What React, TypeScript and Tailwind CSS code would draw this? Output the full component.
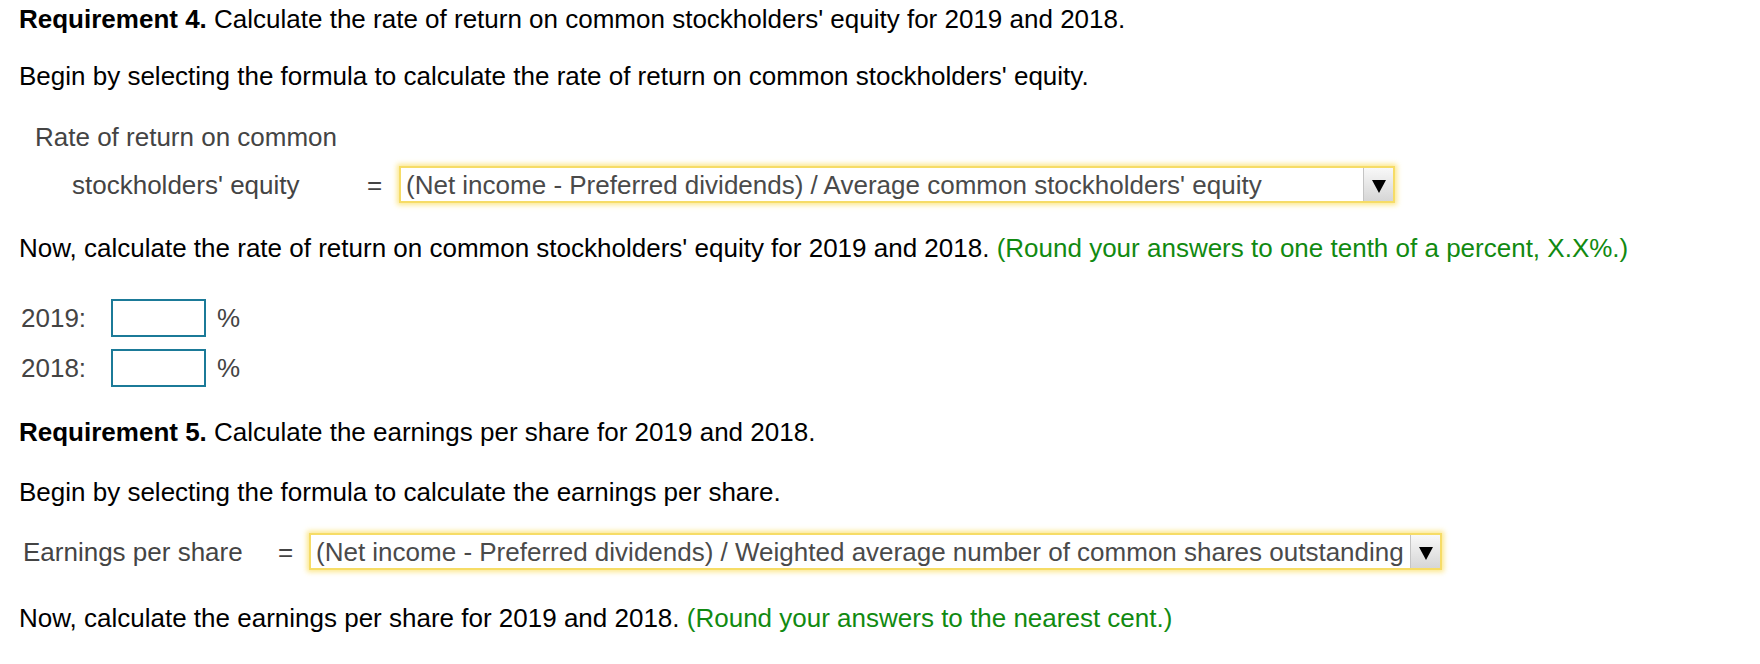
import { useState } from "react";

const font = { fontFamily: '"Liberation Sans", Arial, sans-serif' };

interface FormulaSelectProps {
  value: string;
  width: string;
}

const FormulaSelect = ({ value, width }: FormulaSelectProps) => (
  <div
    className={`flex h-[37px] items-stretch border-2 border-[#f6dc66] bg-white shadow-[0_0_5px_2px_rgba(250,215,60,0.6)] ${width}`}
  >
    <div className="flex flex-1 items-center whitespace-nowrap pl-[5px] text-[#4a4a4a]">{value}</div>
    <div className="flex w-[30px] items-center justify-center border-l border-[#c4c4c4] bg-gradient-to-b from-[#f8f8f8] to-[#d6d6d6] pt-[2px]">
      <svg width="14" height="14" viewBox="0 0 14 14">
        <polygon points="0,1 14,1 7,14" fill="#000" />
      </svg>
    </div>
  </div>
);

const PercentInput = ({ label }: { label: string }) => {
  const [val, setVal] = useState("");
  return (
    <div className="flex items-center">
      <span className="w-[90px] text-[#444]">{label}</span>
      <input
        value={val}
        onChange={(e) => setVal(e.target.value)}
        className="h-[38px] w-[95px] border-2 border-[#1b7a98] bg-white outline-none"
      />
      <span className="ml-[11px] text-[#444]">%</span>
    </div>
  );
};

export default function App() {
  return (
    <div className="min-h-[664px] w-[1760px] bg-white pl-[19px] pt-[4px] text-[26px] leading-[30px] text-black" style={font}>
      <p>
        <b>Requirement 4.</b> Calculate the rate of return on common stockholders' equity for 2019 and 2018.
      </p>
      <p className="mt-[27px]">Begin by selecting the formula to calculate the rate of return on common stockholders' equity.</p>

      <p className="ml-[16px] mt-[31px] text-[#444]">Rate of return on common</p>
      <div className="mt-[14px] flex items-center">
        <span className="ml-[53px] w-[295px] text-[#444]">stockholders' equity</span>
        <span className="w-[32px] text-[#444]">=</span>
        <FormulaSelect
          value="(Net income - Preferred dividends) / Average common stockholders' equity"
          width="w-[996px]"
        />
      </div>

      <p className="mt-[30px]">
        Now, calculate the rate of return on common stockholders' equity for 2019 and 2018.{" "}
        <span className="text-[#118a11]">(Round your answers to one tenth of a percent, X.X%.)</span>
      </p>

      <div className="mt-[36px] flex flex-col gap-[12px] pl-[2px]">
        <PercentInput label="2019:" />
        <PercentInput label="2018:" />
      </div>

      <p className="mt-[30px]">
        <b>Requirement 5.</b> Calculate the earnings per share for 2019 and 2018.
      </p>
      <p className="mt-[30px]">Begin by selecting the formula to calculate the earnings per share.</p>

      <div className="mt-[26px] flex items-center">
        <span className="ml-[4px] w-[255px] text-[#444]">Earnings per share</span>
        <span className="w-[31px] text-[#444]">=</span>
        <FormulaSelect
          value="(Net income - Preferred dividends) / Weighted average number of common shares outstanding"
          width="w-[1133px]"
        />
      </div>

      <p className="mt-[33px]">
        Now, calculate the earnings per share for 2019 and 2018.{" "}
        <span className="text-[#118a11]">(Round your answers to the nearest cent.)</span>
      </p>
    </div>
  );
}
